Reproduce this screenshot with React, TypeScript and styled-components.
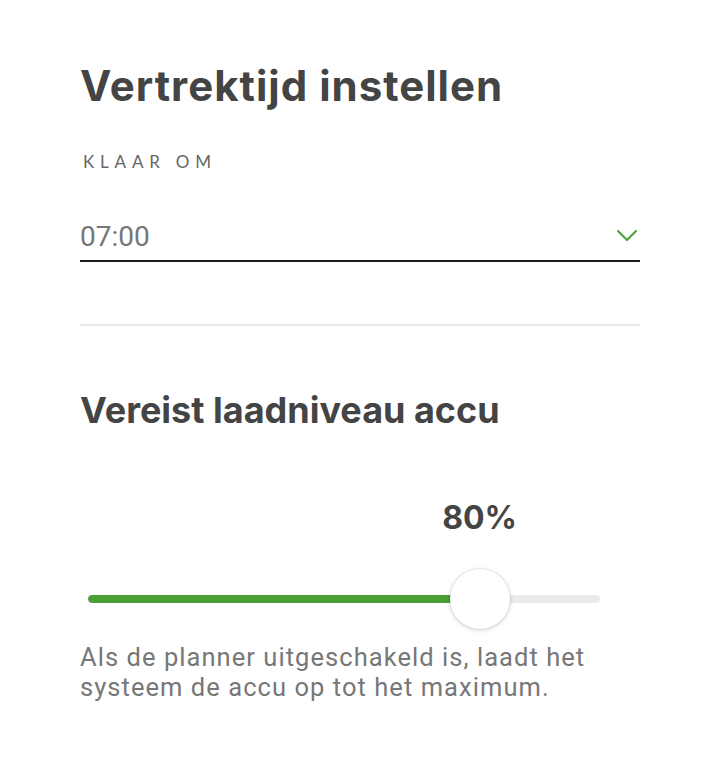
import React from "react";
import styled, { createGlobalStyle } from "styled-components";

const Global = createGlobalStyle`
  html, body { margin: 0; padding: 0; background: #ffffff; }
  body { font-family: Roboto, "Noto Sans", sans-serif; }
`;

const Page = styled.div`
  width: 720px;
  min-height: 766px;
  box-sizing: border-box;
  padding: 60px 80px 0 80px;
  display: flex;
  flex-direction: column;
`;

const Title = styled.h1`
  margin: 0;
  font-family: Inter, "Open Sans", sans-serif;
  font-weight: 700;
  font-size: 42px;
  line-height: 52px;
  letter-spacing: 1px;
  color: #444444;
`;

const SubTitle = styled.h2`
  margin: 0;
  font-family: Inter, "Open Sans", sans-serif;
  font-weight: 700;
  font-size: 36px;
  line-height: 44px;
  color: #444444;
`;

const FieldLabel = styled.div`
  margin-top: 38px;
  font-family: Lato, "Open Sans", sans-serif;
  font-size: 17px;
  line-height: 24px;
  letter-spacing: 5.8px;
  color: #666666;
  padding-left: 3px;
`;

const Select = styled.div`
  margin-top: 38px;
  display: flex;
  align-items: center;
  justify-content: space-between;
  height: 48px;
  border-bottom: 2px solid #1a1a1a;
`;

const SelectValue = styled.span`
  font-family: Roboto, sans-serif;
  font-size: 28px;
  color: #777777;
`;

const Chevron = styled.svg`
  width: 22px;
  height: 14px;
  margin-right: 2px;
`;

const Divider = styled.hr`
  margin: 62px 0 0 0;
  border: 0;
  height: 2px;
  background: #e8e8e8;
`;

const Section = styled.section`
  margin-top: 62px;
`;

const SliderWrap = styled.div`
  position: relative;
  margin-top: 66px;
  width: 512px;
  margin-left: 8px;
  height: 140px;
`;

const ValueLabel = styled.div`
  position: absolute;
  top: 0;
  transform: translateX(-50%);
  font-family: Inter, "Open Sans", sans-serif;
  font-weight: 700;
  font-size: 32px;
  line-height: 40px;
  color: #444444;
`;

const Track = styled.div`
  position: absolute;
  left: 0;
  right: 0;
  top: 97px;
  height: 8px;
  border-radius: 4px;
  background: #ebebeb;
  overflow: hidden;
`;

const Fill = styled.div`
  height: 100%;
  background: #4c9e37;
  border-radius: 4px;
`;

const Thumb = styled.div`
  position: absolute;
  top: 71px;
  width: 60px;
  height: 60px;
  margin-left: -30px;
  border-radius: 50%;
  background: #ffffff;
  box-shadow: 0 0 0 1px rgba(0, 0, 0, 0.06), 0 1px 4px rgba(0, 0, 0, 0.18);
`;

const Help = styled.p`
  margin: 4px 0 0 0;
  font-family: Roboto, sans-serif;
  font-size: 25.5px;
  line-height: 30px;
  letter-spacing: 1.05px;
  color: #777777;
`;

const Slider: React.FC<{ value: number }> = ({ value }) => {
  const width = 512;
  const r = 30;
  const center = r + (value / 100) * (width - 2 * r);
  return (
    <SliderWrap>
      <ValueLabel style={{ left: center }}>{value}%</ValueLabel>
      <Track>
        <Fill style={{ width: center }} />
      </Track>
      <Thumb style={{ left: center }} />
    </SliderWrap>
  );
};

export default function App() {
  return (
    <>
      <Global />
      <Page>
        <Title>Vertrektijd instellen</Title>
        <FieldLabel>KLAAR OM</FieldLabel>
        <Select>
          <SelectValue>07:00</SelectValue>
          <Chevron viewBox="0 0 22 14" fill="none">
            <path d="M2 2 L11 11 L20 2" stroke="#4c9e37" strokeWidth="2" strokeLinecap="round" strokeLinejoin="round" />
          </Chevron>
        </Select>
        <Divider />
        <Section>
          <SubTitle>Vereist laadniveau accu</SubTitle>
          <Slider value={80} />
          <Help>
            Als de planner uitgeschakeld is, laadt het systeem de accu op tot het maximum.
          </Help>
        </Section>
      </Page>
    </>
  );
}
